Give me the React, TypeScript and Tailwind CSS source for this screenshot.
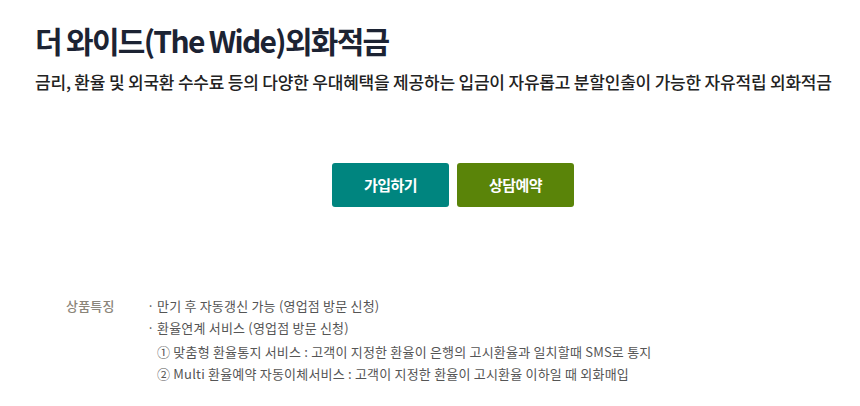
export default function App() {
  const kr = { fontFamily: '"Noto Sans CJK KR", "Noto Sans", sans-serif' };

  return (
    <div className="w-[860px] h-[406px] bg-white overflow-hidden" style={kr}>
      <div className="pl-[35px] pt-[22px]">
        <h1 className="text-[30px] leading-[36px] font-bold tracking-[-1.7px] text-[#1c2333]">
          더 와이드(The Wide)외화적금
        </h1>
        <p className="mt-[12px] text-[17px] leading-[24px] font-medium tracking-[-0.2px] text-[#222]">
          금리, 환율 및 외국환 수수료 등의 다양한 우대혜택을 제공하는 입금이 자유롭고 분할인출이 가능한 자유적립 외화적금
        </p>
      </div>

      <div className="flex gap-2 pl-[332px] mt-[69px]">
        <button className="w-[117px] h-[44px] rounded-[3px] bg-[#00857f] text-white text-[15px] font-bold tracking-[-0.5px]">
          가입하기
        </button>
        <button className="w-[117px] h-[44px] rounded-[3px] bg-[#5a8409] text-white text-[15px] font-bold tracking-[-0.5px]">
          상담예약
        </button>
      </div>

      <div className="flex mt-[88px] pl-[66px] text-[13px] leading-[22px] tracking-[0.2px] text-[#555]">
        <div className="w-[81px] text-[#8b8579] font-medium">상품특징</div>
        <ul>
          <li className="flex">
            <span className="w-[10px]">·</span>
            <span>만기 후 자동갱신 가능 (영업점 방문 신청)</span>
          </li>
          <li className="flex">
            <span className="w-[10px]">·</span>
            <span>환율연계 서비스 (영업점 방문 신청)</span>
          </li>
          <li className="pl-[10px] mt-[2px]">① 맞춤형 환율통지 서비스 : 고객이 지정한 환율이 은행의 고시환율과 일치할때 SMS로 통지</li>
          <li className="pl-[10px]">② Multi 환율예약 자동이체서비스 : 고객이 지정한 환율이 고시환율 이하일 때 외화매입</li>
        </ul>
      </div>
    </div>
  );
}
